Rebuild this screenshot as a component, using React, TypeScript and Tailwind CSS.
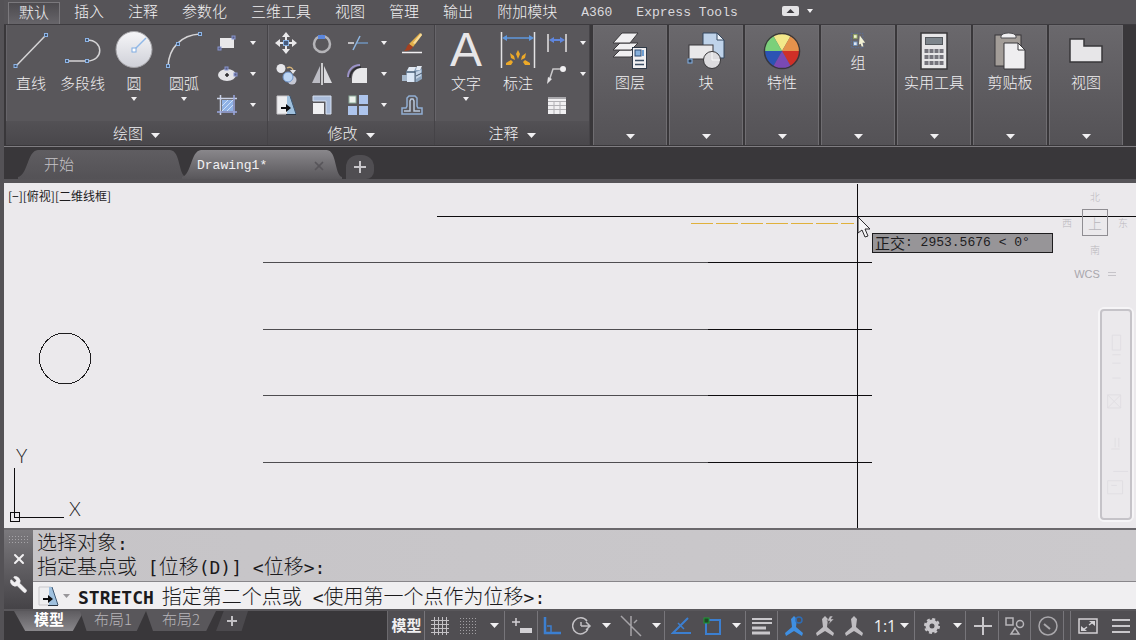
import type { ReactNode } from 'react';
import { Wrench, X } from 'lucide-react';

const MENU = ['插入', '注释', '参数化', '三维工具', '视图', '管理', '输出', '附加模块'];

function Caret({ small }: { small?: boolean }) {
    return small ? (
        <svg width="6" height="4" viewBox="0 0 6 4" className="shrink-0"><path d="M0 0h6L3 4z" fill="#f1f0f2" /></svg>
    ) : (
        <svg width="9" height="5" viewBox="0 0 9 5" className="shrink-0"><path d="M0 0h9L4.500 5z" fill="#f1f0f2" /></svg>
    );
}

/* Grip squares on the geometry icons */
function Grip({ x, y }: { x: number; y: number }) {
    return <rect x={x - 1.5} y={y - 1.5} width="3" height="3" fill="#3f536e" stroke="#8db4e6" />;
}

function LineIcon() {
    return (
        <svg width="38" height="38" viewBox="0 0 38 38">
            <path d="M4 35 34 4" stroke="#d5d4d6" strokeWidth="1.500" />
            <Grip x={3.5} y={35} />
            <Grip x={34} y={4} />
        </svg>
    );
}

function PolylineIcon() {
    return (
        <svg width="38" height="38" viewBox="0 0 38 38" fill="none">
            <path d="M3 30h20c17 0 17-21 0-21" stroke="#d5d4d6" strokeWidth="1.500" />
            <Grip x={3} y={30} />
            <Grip x={23} y={30} />
            <Grip x={23} y={9} />
        </svg>
    );
}

function CircleIcon() {
    return (
        <svg width="38" height="38" viewBox="0 0 38 38">
            <defs>
                <linearGradient id="disc" x1="0" y1="0" x2="0" y2="1">
                    <stop offset="0" stopColor="#f6f6f8" />
                    <stop offset="1" stopColor="#cfd0d8" />
                </linearGradient>
            </defs>
            <circle cx="19" cy="18.500" r="18" fill="url(#disc)" stroke="#a3a2a6" />
            <path d="M19 19 31 7" stroke="#8fb8e8" strokeWidth="1.500" />
            <rect x="17" y="17" width="4" height="4" fill="#fff" stroke="#7fabe2" />
        </svg>
    );
}

function ArcIcon() {
    return (
        <svg width="38" height="38" viewBox="0 0 38 38" fill="none">
            <path d="M3 35C4 17 16 4 35 3" stroke="#d5d4d6" strokeWidth="1.500" />
            <Grip x={3} y={35} />
            <Grip x={13} y={13} />
            <Grip x={35} y={3} />
        </svg>
    );
}

function RectIcon() {
    return (
        <svg width="22" height="22" viewBox="0 0 22 22">
            <rect x="4" y="6" width="14" height="10" fill="#e9e8ea" />
            <rect x="16" y="4" width="3" height="3" fill="#5b5f86" stroke="#8896cf" />
            <rect x="2" y="15" width="3" height="3" fill="#5b5f86" stroke="#8896cf" />
        </svg>
    );
}

function EllipseIcon() {
    return (
        <svg width="22" height="22" viewBox="0 0 22 22">
            <ellipse cx="11" cy="12" rx="9" ry="6" fill="#e4e4e8" />
            <path d="M9 12h4M11 10v4" stroke="#29282b" strokeWidth="1.500" />
            <rect x="9" y="4" width="3" height="3" fill="#5b5f86" stroke="#8896cf" />
            <rect x="18" y="10" width="3" height="3" fill="#5b5f86" stroke="#8896cf" />
        </svg>
    );
}

function HatchIcon() {
    return (
        <svg width="22" height="22" viewBox="0 0 22 22" fill="none">
            <rect x="6" y="6" width="11" height="11" fill="#8fb2e6" />
            <path d="M6 12l6-6M6 17 17 6M11 17l6-6" stroke="#cfe0f8" />
            <path d="M4.500 1v20M1 4.500h20" stroke="#c9d1e6" strokeWidth="1.500" />
            <path d="M18 1v20M1 18h20" stroke="#9aa8e0" strokeWidth="1.500" />
        </svg>
    );
}

function MoveIcon() {
    return (
        <svg width="22" height="22" viewBox="0 0 22 22" fill="#e9e8ea">
            <path d="M11 0l4 5h-3v3h-2V5H7zM11 22l4-5h-3v-3h-2v3H7zM0 11l5-4v3h3v2H5v3zM22 11l-5-4v3h-3v2h3v3z" />
            <rect x="8.500" y="8.500" width="5" height="5" fill="#46597a" stroke="#88b1e2" />
        </svg>
    );
}

function RotateIcon() {
    return (
        <svg width="22" height="22" viewBox="0 0 22 22" fill="none">
            <circle cx="11" cy="12" r="8" stroke="#b5b4b8" strokeWidth="2.500" />
            <path d="M7 3h7v4H7z" fill="#5b86dc" />
        </svg>
    );
}

function TrimIcon() {
    return (
        <svg width="22" height="22" viewBox="0 0 22 22" fill="none">
            <path d="M1 11h6" stroke="#e3e2e4" strokeWidth="1.500" />
            <path d="M9 11h12" stroke="#6f93bd" strokeWidth="1.500" />
            <path d="M6 18 13 4" stroke="#8fb5e0" strokeWidth="1.500" />
        </svg>
    );
}

function EraseIcon() {
    return (
        <svg width="22" height="22" viewBox="0 0 22 22">
            <path d="M1 20.500h20" stroke="#f1f0f2" strokeWidth="1.500" />
            <path d="M19 1l2 2-9 12-4-3z" fill="#e3b04a" />
            <path d="M20 1l1 2-7 9-2-1z" fill="#f6dc9a" />
            <path d="M8 12l4 3c-2 3-5 4-9 4 3-2 2-5 5-7z" fill="#a6401f" />
        </svg>
    );
}

function CopyIcon() {
    return (
        <svg width="22" height="22" viewBox="0 0 22 22">
            <circle cx="6" cy="5.500" r="4.500" fill="#e6e6ea" />
            <path d="M12 5c3-2 6 0 6 3" fill="none" stroke="#d3b27a" strokeWidth="1.500" />
            <path d="M15 7h6l-3 4z" fill="#e6e6ea" />
            <circle cx="17" cy="17" r="4.500" fill="#c6c8d4" />
            <circle cx="13" cy="14" r="5" fill="#bcd5f4" stroke="#6f94c9" />
        </svg>
    );
}

function MirrorIcon() {
    return (
        <svg width="22" height="22" viewBox="0 0 22 22">
            <path d="M9 3v17H1z" fill="#bcbcc4" />
            <path d="M13 3v17h8z" fill="#dadade" />
            <path d="M11 0v22" stroke="#f1f0f2" strokeWidth="1.500" />
        </svg>
    );
}

function FilletIcon() {
    return (
        <svg width="22" height="22" viewBox="0 0 22 22">
            <path d="M5 20v-4C5 9 9 5 14 5h6v15z" fill="#e8e8ea" />
            <path d="M1 14C1 7 6 2 13 2" fill="none" stroke="#9c93c8" strokeWidth="2" />
            <path d="M3 15C3 9 8 4 14 4" fill="none" stroke="#2b2b31" strokeWidth="1.500" />
        </svg>
    );
}

function ExplodeIcon() {
    return (
        <svg width="22" height="22" viewBox="0 0 22 22">
            <path d="M5 9l3-5h12l1 3v9l-5 3H6z" fill="#8ea5be" />
            <path d="M8 4h7l-2 4H6zM16 3h5l-2 4h-4z" fill="#e2e9f2" />
            <rect x="1" y="12" width="5" height="6" fill="#a6b8cc" />
            <rect x="6" y="10" width="8" height="9" fill="#dbe7f6" />
            <path d="M15 9l5-2v6l-5 3z" fill="#c3d3e6" />
            <path d="M14 8v11M5 9h9M15 13l6-3" stroke="#47586c" fill="none" />
        </svg>
    );
}

function StretchIcon() {
    return (
        <svg width="22" height="22" viewBox="0 0 22 22">
            <path d="M2 2h12v18H2z" fill="#eeeef0" stroke="#c9c7cb" />
            <path d="M12 2h3l6 18h-9z" fill="#9fc0de" />
            <path d="M15 2l6 18" stroke="#3e5873" />
            <path d="M11 20.500h10" stroke="#2b3542" />
            <path d="M6 13h5v-3l5 4-5 4v-3H6z" fill="#0c0c0e" />
        </svg>
    );
}

function ScaleIcon() {
    return (
        <svg width="22" height="22" viewBox="0 0 22 22">
            <path d="M2 2h18v18h-5V7H2z" fill="#a9bbd9" stroke="#d5dff0" />
            <rect x="2" y="9" width="11" height="11" fill="#efeff1" />
        </svg>
    );
}

function ArrayIcon() {
    return (
        <svg width="22" height="22" viewBox="0 0 22 22">
            <rect x="2" y="2" width="7" height="7" fill="#eef3ee" stroke="#8fae9d" />
            <rect x="12" y="1" width="9" height="9" fill="#adc4ec" />
            <rect x="1" y="12" width="9" height="9" fill="#adc4ec" />
            <rect x="12" y="12" width="9" height="9" fill="#adc4ec" />
        </svg>
    );
}

function OffsetIcon() {
    return (
        <svg width="22" height="22" viewBox="0 0 22 22" fill="none">
            <path d="M1 20h20v-6h-4l-1-2V4l-2-2H8L6 4v8l-1 2H1z" stroke="#91afd4" strokeWidth="1.500" />
            <path d="M3 17h6V7l1-2h2l1 2v10h6" stroke="#b9c8dc" strokeWidth="1.500" />
        </svg>
    );
}

function DimensionIcon() {
    return (
        <svg width="36" height="38" viewBox="0 0 36 38">
            <path d="M1.500 1v36M34.500 1v36" stroke="#e3e2e4" strokeWidth="1.500" />
            <path d="M5 7h26" stroke="#5f97dd" strokeWidth="1.500" />
            <path d="M2 7l5-3v6zM34 7l-5-3v6z" fill="#5f97dd" />
            <g fill="#eda928">
                <path d="M18 19l2 4-2 5-2-5zM10 22l4 3 1 4-4-2zM26 22l-4 3-1 4 4-2zM6 32l5-3 2 2-2 3-5 0zM30 32l-5-3-2 2 2 3 5 0z" />
            </g>
        </svg>
    );
}

function LinearDimIcon() {
    return (
        <svg width="22" height="22" viewBox="0 0 22 22">
            <path d="M2 2v18M20 2v18" stroke="#e3e2e4" strokeWidth="1.500" />
            <path d="M5 8h12" stroke="#5f86dd" strokeWidth="2" />
            <path d="M3 8l5-3v6zM19 8l-5-3v6z" fill="#5f86dd" />
        </svg>
    );
}

function LeaderIcon() {
    return (
        <svg width="22" height="22" viewBox="0 0 22 22" fill="none">
            <path d="M3 18 7 6h7" stroke="#c9c8ca" strokeWidth="1.500" />
            <circle cx="17" cy="6" r="3" fill="#f1f0f2" />
            <path d="M1 21l1-7 4 2z" fill="#e3e2e4" />
        </svg>
    );
}

function TableIcon() {
    return (
        <svg width="22" height="22" viewBox="0 0 22 22">
            <rect x="2" y="3" width="18" height="17" fill="#f1f0f2" />
            <path d="M2 4h18" stroke="#a9a8ac" strokeWidth="2" />
            <path d="M2 7.500h18M2 11.500h18M2 15.500h18M8 7v13M14 7v13" stroke="#b1b0b4" />
        </svg>
    );
}

function LayersIcon() {
    return (
        <svg width="38" height="38" viewBox="0 0 38 38">
            <g fill="#f1f0f2" stroke="#3a393c">
                <path d="M2 25l7-7h18l-7 7z" />
                <path d="M2 18l7-7h18l-7 7z" />
                <path d="M2 11l9-10h16l-8 10z" />
            </g>
            <rect x="21.500" y="15.500" width="14" height="21" fill="#f1f0f2" stroke="#2f3a48" />
            <rect x="24" y="18" width="6" height="6" fill="#86b0dc" stroke="#2c4a72" />
            <path d="M32 18v6" stroke="#6f9fd2" strokeWidth="2" />
            <path d="M24 28.500h9M24 32.500h9" stroke="#3b4d63" strokeWidth="1.500" />
        </svg>
    );
}

function BlockIcon() {
    return (
        <svg width="38" height="38" viewBox="0 0 38 38">
            <path d="M16 1h14l7 7v18H16z" fill="#bfd3ea" stroke="#33475f" />
            <path d="M30 1v7h7z" fill="#eef4fb" stroke="#33475f" />
            <rect x="2" y="13" width="24" height="14" fill="#e9e8ea" stroke="#38373a" />
            <circle cx="25" cy="28" r="8.500" fill="#dddcdf" stroke="#38373a" />
            <path d="M25 20v8h8" fill="none" stroke="#f9f9fa" />
            <rect x="1" y="27" width="4" height="4" fill="#2f4258" stroke="#86b2e4" />
        </svg>
    );
}

function WheelIcon() {
    return (
        <svg width="38" height="38" viewBox="-20 -20 40 40">
            <path d="M0 0-9.500-16.500A19 19 0 0 1 9.500-16.500z" fill="#f3e88a" />
            <path d="M0 0 9.500-16.500A19 19 0 0 1 19 0z" fill="#e5924c" />
            <path d="M0 0h19A19 19 0 0 1 9.500 16.500z" fill="#cf2f27" />
            <path d="M0 0 9.500 16.500A19 19 0 0 1-9.500 16.500z" fill="#7a49b4" />
            <path d="M0 0-9.500 16.500A19 19 0 0 1-19 0z" fill="#2c53b4" />
            <path d="M0 0h-19A19 19 0 0 1-9.500-16.500z" fill="#7bd07a" />
            <circle r="18.500" fill="none" stroke="#39383b" strokeWidth="1.500" />
        </svg>
    );
}

function GroupIcon() {
    return (
        <svg width="18" height="18" viewBox="0 1 18 20">
            <rect x="1.500" y="2.500" width="13" height="16" fill="none" stroke="#5b6f9a" strokeDasharray="2 1" />
            <rect x="4" y="4" width="4" height="4" fill="#eef0d0" stroke="#8aa05c" />
            <rect x="4" y="12" width="4" height="4" fill="#dfe6f2" stroke="#6789b8" />
            <path d="M11 5l6 8-3 0 1 4-2 0-1-3-2 1z" fill="#f2f1d4" />
        </svg>
    );
}

function CalculatorIcon() {
    return (
        <svg width="28" height="38" viewBox="0 0 28 38">
            <rect x="1" y="1" width="26" height="36" fill="#e7e6e8" stroke="#38373a" strokeWidth="1.500" />
            <rect x="5.500" y="5.500" width="17" height="7" fill="#7d858c" stroke="#55595e" />
            <g fill="#75747c">
                {[17, 23, 29].map((y) => [4, 9, 14, 19].map((x) => (
                    <rect key={`${x}-${y}`} x={x + 0.5} y={y} width="4" height="4" />
                )))}
            </g>
        </svg>
    );
}

function ClipboardIcon() {
    return (
        <svg width="32" height="38" viewBox="0 0 32 38">
            <rect x="1" y="3" width="26" height="31" fill="#a39d98" stroke="#38373a" />
            <path d="M7 4c1-4 14-4 15 0v2H7z" fill="#f1f0f2" stroke="#4d4c50" />
            <path d="M10 11h14l7 7v19H10z" fill="#efeef0" stroke="#38373a" />
            <path d="M24 11v7h7z" fill="#fff" stroke="#38373a" />
        </svg>
    );
}

function ViewIcon() {
    return (
        <svg width="34" height="38" viewBox="0 0 34 38">
            <path d="M1 7h14v7h18v16H1z" fill="#e7e6e8" stroke="#38373a" strokeWidth="1.500" />
        </svg>
    );
}

function BigTool({ label, icon, drop }: { label: string; icon: ReactNode; drop?: boolean }) {
    return (
        <button className="flex flex-col items-center min-w-[50px] px-1">
            {icon}
            <span className="mt-1 mb-1 leading-5">{label}</span>
            {drop && <Caret small />}
        </button>
    );
}

function SmallTool({ name, icon, drop }: { name: string; icon: ReactNode; drop?: boolean }) {
    return (
        <button aria-label={name} className="flex items-center gap-3 h-[31px] px-[7px]">
            {icon}
            {drop && <Caret small />}
        </button>
    );
}

function Panel({ title, children }: { title: string; children: ReactNode }) {
    return (
        <section className="flex flex-col border-r border-[#454347] shadow-[inset_1px_0_0_#67656a] bg-[#59575b]">
            <div className="flex-1 flex items-start">{children}</div>
            <button className="flex items-center justify-center gap-2 h-6 bg-linear-to-b from-[#535155] to-[#49474b]">
                {title}
                <span className="mt-1"><Caret /></span>
            </button>
        </section>
    );
}

function CollapsedPanel({ label, icon }: { label: string; icon: ReactNode }) {
    return (
        <button className="flex flex-col items-center justify-between w-[74px] pt-1.5 pb-1.5 border-x border-t border-[#6f6d71] bg-linear-to-b from-[#6a686c] to-[#545256]">
            <span className="flex flex-col items-center">
                {icon}
                <span className="mt-0.5 leading-5 whitespace-nowrap">{label}</span>
            </span>
            <Caret />
        </button>
    );
}

/* Ideographs keep the base size, Latin runs get the narrower monospaced face */
function Prompt({ text }: { text: string }) {
    return (
        <>
            {text.split(/([\x20-\x7e]+)/).map((part, i) => (
                <span key={i} className={i % 2 ? 'font-[DejaVu_Sans_Mono,monospace] text-[18px] leading-none whitespace-pre' : ''}>{part}</span>
            ))}
        </>
    );
}

function StatusGroup({ children }: { children: ReactNode }) {
    return <div className="flex items-stretch shadow-[inset_-1px_0_0_#77757a]">{children}</div>;
}

function StatusButton({ name, width, children }: { name: string; width: string; children: ReactNode }) {
    return <button aria-label={name} className={`flex items-center justify-center ${width}`}>{children}</button>;
}

function FileTabShape({ top, bottom, id }: { top: string; bottom: string; id: string }) {
    return (
        <svg className="absolute inset-0 w-full h-full" viewBox="0 0 168 30" preserveAspectRatio="none">
            <defs>
                <linearGradient id={id} x1="0" y1="0" x2="0" y2="1">
                    <stop offset="0" stopColor={top} />
                    <stop offset="1" stopColor={bottom} />
                </linearGradient>
            </defs>
            <path d="M0 28C10 26 9 2 20 1H152C163 2 160 26 168 28V30H0z" fill={`url(#${id})`} />
        </svg>
    );
}

function Ribbon() {
    return (
        <div className="flex items-stretch gap-[2px] h-[121px] pl-0.5 bg-[#39373a] border-t border-[#3d3b3f]">
            <div className="flex mr-px">
                <Panel title="绘图">
                    <div className="flex pt-1.5">
                        <BigTool label="直线" icon={<LineIcon />} />
                        <BigTool label="多段线" icon={<PolylineIcon />} />
                        <BigTool label="圆" icon={<CircleIcon />} drop />
                        <BigTool label="圆弧" icon={<ArcIcon />} drop />
                    </div>
                    <div className="flex flex-col pt-0.5 pr-1">
                        <SmallTool name="矩形" icon={<RectIcon />} drop />
                        <SmallTool name="椭圆" icon={<EllipseIcon />} drop />
                        <SmallTool name="图案填充" icon={<HatchIcon />} drop />
                    </div>
                </Panel>
                <Panel title="修改">
                    <div className="grid grid-cols-[36px_36px_54px_36px] pt-0.5 pr-1">
                        <SmallTool name="移动" icon={<MoveIcon />} />
                        <SmallTool name="旋转" icon={<RotateIcon />} />
                        <SmallTool name="修剪" icon={<TrimIcon />} drop />
                        <SmallTool name="删除" icon={<EraseIcon />} />
                        <SmallTool name="复制" icon={<CopyIcon />} />
                        <SmallTool name="镜像" icon={<MirrorIcon />} />
                        <SmallTool name="圆角" icon={<FilletIcon />} drop />
                        <SmallTool name="分解" icon={<ExplodeIcon />} />
                        <SmallTool name="拉伸" icon={<StretchIcon />} />
                        <SmallTool name="缩放" icon={<ScaleIcon />} />
                        <SmallTool name="阵列" icon={<ArrayIcon />} drop />
                        <SmallTool name="偏移" icon={<OffsetIcon />} />
                    </div>
                </Panel>
                <Panel title="注释">
                    <div className="flex gap-0.5 pl-1.5 pt-1.5">
                        <BigTool
                            label="文字"
                            icon={<span className="h-[38px] text-[48px] leading-[38px] text-[#e7e6e8] font-[Liberation_Sans,sans-serif]">A</span>}
                            drop
                        />
                        <BigTool label="标注" icon={<DimensionIcon />} />
                    </div>
                    <div className="flex flex-col items-start pt-0.5 -mx-1">
                        <SmallTool name="线性" icon={<LinearDimIcon />} drop />
                        <SmallTool name="引线" icon={<LeaderIcon />} drop />
                        <SmallTool name="表格" icon={<TableIcon />} />
                    </div>
                </Panel>
            </div>
            <CollapsedPanel label="图层" icon={<LayersIcon />} />
            <CollapsedPanel label="块" icon={<BlockIcon />} />
            <CollapsedPanel label="特性" icon={<WheelIcon />} />
            <CollapsedPanel label="组" icon={<GroupIcon />} />
            <CollapsedPanel label="实用工具" icon={<CalculatorIcon />} />
            <CollapsedPanel label="剪贴板" icon={<ClipboardIcon />} />
            <CollapsedPanel label="视图" icon={<ViewIcon />} />
        </div>
    );
}

function DrawingArea() {
    return (
        <main className="relative flex-1 min-h-[340px] bg-[#ebe9ec] overflow-hidden text-[#1d1c1e]">
            <svg className="absolute inset-0 w-full h-full" shapeRendering="crispEdges" fill="none">
                {[79, 146, 212, 279].map((y) => (
                    <g key={y}>
                        <path d={`M259 ${y}.5h445`} stroke="#4e4d50" />
                        <path d={`M704 ${y}.5h164`} stroke="#0d0c0e" />
                    </g>
                ))}
                <line x1="687" y1="40.500" x2="850" y2="40.500" stroke="#e0b13c" strokeDasharray="22 3" />
                <circle cx="61" cy="175.500" r="25.500" stroke="#1d1c1e" />
                <line x1="433" y1="33.500" x2="100%" y2="33.500" stroke="#0d0c0e" />
                <line x1="853.500" y1="1" x2="853.500" y2="100%" stroke="#0d0c0e" />
            </svg>
            <span className="absolute left-1 top-1 text-[12px] leading-[18px] font-normal font-[Noto_Sans_CJK_SC,sans-serif]">[−][俯视][二维线框]</span>

            <svg className="absolute left-0 bottom-0" width="90" height="90" fill="none" stroke="#0d0c0e">
                <path d="M10.500 30v49.500H60M6.500 74.500h9v9h-9z" shapeRendering="crispEdges" />
                <g fill="#1d1c1e" stroke="none" fontSize="19" fontFamily="Lato, sans-serif" fontWeight="300">
                    <text x="12" y="25">Y</text>
                    <text x="65" y="78">X</text>
                </g>
            </svg>

            <div className="absolute left-[868px] top-[50px] flex items-center h-5 w-[181px] pl-0.5 bg-[#979598] border border-[#1d1c1e] font-normal whitespace-pre">
                正交<span className="font-[Liberation_Mono,monospace] text-[13px]">: 2953.5676 &lt; 0°</span>
            </div>
            <svg className="absolute left-[853px] top-[33px]" width="14" height="24" viewBox="0 0 14 24">
                <path d="M1 1v16l4-3 3 7 3-1-3-7h5z" fill="#f5f4f6" stroke="#2c2b2e" />
            </svg>

            <div className="absolute right-2 top-1 w-[66px] flex flex-col items-center text-[10px] leading-5 text-[#b9b7bc]">
                <span>北</span>
                <div className="flex items-center justify-between w-full mt-0.5">
                    <span>西</span>
                    <span className="flex items-center justify-center w-[26px] h-[27px] border border-[#8f8d92] text-[14px]">上</span>
                    <span>东</span>
                </div>
                <span className="mt-1">南</span>
                <button className="flex items-center gap-2 mt-1.5 text-[11px] leading-4 text-[#a9a7ac] font-[Liberation_Sans,sans-serif]">
                    WCS<span className="w-2 h-1 border-y border-[#c6c4c9]" />
                </button>
            </div>

            <div className="absolute right-0.5 top-[124px] bottom-1.5 w-9 p-px rounded-md border border-[#f6f5f7] bg-[#f6f5f7]">
                <svg className="w-full h-full rounded border-2 border-[#c5c3c8] bg-[#ebe9ec]" viewBox="0 0 30 210" fill="none" stroke="#e0dee2">
                    <path d="M11 20h9v16h-9zM11 41h9M11 50h9M11 66h9M6 84l14 14M20 84 6 98M6 84h14v14H6zM14 130v10M18 130v10M10 142h9M12 166h16M6 176h16v14H6zM10 181h6" />
                </svg>
            </div>
        </main>
    );
}

function CommandLine() {
    return (
        <div className="flex h-[81px] shrink-0 border-t-2 border-[#6a686c] text-[20px] text-[#1b1a1c]">
            <div className="flex flex-col items-center gap-2 w-[29px] pt-1.5 bg-linear-to-b from-[#7b797d] to-[#454347] text-[#f1f0f2]">
                <svg width="22" height="7" viewBox="0 0 22 7" stroke="#a6a4a8" strokeDasharray="1 2">
                    <path d="M1 .5h20M1 3.500h20M1 6.500h20" />
                </svg>
                <button aria-label="关闭"><X size={16} strokeWidth={3} /></button>
                <button aria-label="自定义"><Wrench size={19} fill="#f1f0f2" strokeWidth={1} className="-scale-x-100" /></button>
            </div>
            <div className="flex-1 flex flex-col">
                <div className="flex-1 px-1 bg-linear-to-r from-[#c6c4c7] to-[#cbc9cc]">
                    <p className="leading-6"><Prompt text="选择对象:" /></p>
                    <p className="leading-6"><Prompt text="指定基点或 [位移(D)] <位移>:" /></p>
                </div>
                <div className="flex items-center h-7 px-1 border-t border-[#88868a] bg-[#f0eff1]">
                    <button aria-label="最近使用的命令" className="flex items-center gap-1 mr-2">
                        <StretchIcon />
                        <svg width="7" height="4" viewBox="0 0 7 4"><path d="M0 0h7L3.500 4z" fill="#98969a" /></svg>
                    </button>
                    <label htmlFor="command" className="whitespace-pre leading-6">
                        <b className="mr-2 text-[18px] leading-none font-bold font-[DejaVu_Sans_Mono,monospace]">STRETCH</b>
                        <Prompt text="指定第二个点或 <使用第一个点作为位移>:" />
                    </label>
                    <input id="command" className="flex-1 min-w-0 bg-transparent outline-none" />
                </div>
            </div>
        </div>
    );
}

function AnnoFigure({ color, extra }: { color: string; extra?: ReactNode }) {
    return (
        <svg width="22" height="22" viewBox="0 0 22 22" fill={color}>
            <path d="M11 1l3 3-1 8 7 6-1 3-8-5-8 5-1-3 7-6-1-8z" />
            {extra}
        </svg>
    );
}

function StatusBar() {
    return (
        <footer className="flex items-stretch h-[31px] shrink-0 bg-[#39373a] border-t-2 border-[#59575b] text-[#f1f0f2]">
            <nav className="flex items-start h-5 pl-2.5 text-[#b7b5b9]">
                <button className="w-[70px] h-5 pb-1 leading-4 text-[15px] font-bold text-white bg-linear-to-b from-[#5e5c60] to-[#89878b] [clip-path:polygon(0_0,100%_0,84%_100%,16%_100%)]">模型</button>
                <button className="w-[66px] h-5 -ml-1 pb-1 leading-4 bg-[#59575b] [clip-path:polygon(0_0,100%_0,86%_100%,10%_100%)]">布局1</button>
                <button className="w-[70px] h-5 pb-1 leading-4 bg-[#59575b] [clip-path:polygon(0_0,100%_0,86%_100%,10%_100%)]">布局2</button>
                <button aria-label="新建布局" className="flex items-center justify-center w-8 h-5 bg-[#4b494d] [clip-path:polygon(24%_0,100%_0,80%_100%,0_100%)]">
                    <svg width="12" height="12" viewBox="0 0 12 12"><path d="M6 1v10M1 6h10" stroke="#c2c0c4" strokeWidth="2" /></svg>
                </button>
            </nav>
            <div className="flex items-stretch ml-auto bg-[#504e52] border-l border-[#6b696d]">
                <StatusGroup>
                    <button className="w-[37px] text-[15px] font-bold whitespace-nowrap text-center">模型</button>
                </StatusGroup>
                <StatusGroup>
                    <StatusButton name="栅格" width="w-[30px]">
                        <svg width="18" height="18" viewBox="0 0 18 18" stroke="#c3c1c5"><path d="M3.500 0v18M7.500 0v18M11.500 0v18M15.500 0v18M0 3.500h18M0 7.500h18M0 11.500h18M0 15.500h18" /></svg>
                    </StatusButton>
                    <StatusButton name="捕捉" width="w-7">
                        <svg width="18" height="18" viewBox="0 0 18 18" stroke="#a19fa3" strokeDasharray="1 2"><path d="M0 1.500h18M0 4.500h18M0 7.500h18M0 10.500h18M0 13.500h18M0 16.500h18" /></svg>
                    </StatusButton>
                    <StatusButton name="捕捉设置" width="w-[22px]"><Caret /></StatusButton>
                </StatusGroup>
                <StatusGroup>
                    <StatusButton name="动态输入" width="w-[33px]">
                        <svg width="20" height="18" viewBox="0 0 20 18"><path d="M4 1v8M0 5h8" stroke="#d3d1d5" strokeWidth="1.500" /><rect x="8" y="11" width="12" height="5" fill="#d3d1d5" /></svg>
                    </StatusButton>
                </StatusGroup>
                <StatusGroup>
                    <StatusButton name="正交" width="w-7">
                        <svg width="18" height="18" viewBox="0 0 18 18" fill="none" stroke="#3c7fd0"><path d="M2 0v16h16" strokeWidth="2.500" /><path d="M4 9h4v6" strokeWidth="1.500" /></svg>
                    </StatusButton>
                    <StatusButton name="极轴" width="w-8">
                        <svg width="20" height="18" viewBox="0 0 20 18" fill="none" stroke="#c3c1c5" strokeWidth="1.500"><path d="M15 4a8 8 0 1 0 1 8M9 9h9M9 9V5M14 5l4 4-4 4" /></svg>
                    </StatusButton>
                    <StatusButton name="极轴设置" width="w-4"><Caret /></StatusButton>
                    <StatusButton name="等轴测" width="w-[34px]">
                        <svg width="22" height="22" viewBox="0 0 22 22" stroke="#a5a3a7" strokeWidth="1.500"><path d="M1 1l20 20M11 1v20" /><path d="M14 8l3-3" /></svg>
                    </StatusButton>
                    <StatusButton name="等轴测设置" width="w-[17px]"><Caret /></StatusButton>
                </StatusGroup>
                <StatusGroup>
                    <StatusButton name="对象追踪" width="w-8">
                        <svg width="20" height="18" viewBox="0 0 20 18" fill="none" stroke="#3c7fd0" strokeWidth="1.500"><path d="M17 1 2 16h18" strokeWidth="2" /><path d="M7 6l6 6" /></svg>
                    </StatusButton>
                    <StatusButton name="对象捕捉" width="w-[30px]">
                        <svg width="20" height="20" viewBox="0 0 20 20" fill="none"><rect x="4" y="4" width="14" height="14" stroke="#3c7fd0" strokeWidth="2" /><rect x="2" y="2" width="5" height="5" fill="#1f4a26" stroke="#1c9a35" /></svg>
                    </StatusButton>
                    <StatusButton name="捕捉模式" width="w-[19px]"><Caret /></StatusButton>
                </StatusGroup>
                <StatusGroup>
                    <StatusButton name="线宽" width="w-8">
                        <svg width="20" height="18" viewBox="0 0 20 18" stroke="#c9c7cb"><path d="M0 2h20" strokeWidth="2" /><path d="M0 6h20" strokeWidth="2" /><path d="M0 11h14" strokeWidth="3" /><path d="M0 16h18" strokeWidth="3" /></svg>
                    </StatusButton>
                </StatusGroup>
                <StatusGroup>
                    <StatusButton name="注释可见性" width="w-8">
                        <AnnoFigure color="#3f8fe2" extra={<circle cx="16" cy="5" r="3" fill="none" stroke="#2f6cb4" strokeWidth="1.500" />} />
                    </StatusButton>
                    <StatusButton name="自动缩放" width="w-[30px]">
                        <AnnoFigure color="#bebcc0" extra={<path d="M16 1l-3 5h3l-2 4 6-6h-3l2-3z" stroke="#504e52" strokeWidth=".5" />} />
                    </StatusButton>
                    <StatusButton name="注释比例" width="w-7"><AnnoFigure color="#bebcc0" /></StatusButton>
                    <button className="flex items-center justify-center gap-1 w-[47px] text-[16px] font-normal font-[Open_Sans,sans-serif]">1:1<Caret /></button>
                </StatusGroup>
                <StatusGroup>
                    <StatusButton name="切换工作空间" width="w-[33px]">
                        <svg width="18" height="18" viewBox="0 0 18 18" fill="none" stroke="#c9c7cb"><circle cx="9" cy="9" r="4.500" strokeWidth="4" /><circle cx="9" cy="9" r="7" strokeWidth="2" strokeDasharray="3 2.500" /></svg>
                    </StatusButton>
                    <StatusButton name="工作空间列表" width="w-[18px]"><Caret /></StatusButton>
                </StatusGroup>
                <StatusGroup>
                    <StatusButton name="注释监视器" width="w-[33px]">
                        <svg width="18" height="18" viewBox="0 0 18 18" stroke="#c9c7cb" strokeWidth="2"><path d="M9 0v18M0 9h18" /></svg>
                    </StatusButton>
                </StatusGroup>
                <StatusGroup>
                    <StatusButton name="隔离对象" width="w-8">
                        <svg width="20" height="20" viewBox="0 0 20 20" fill="none" stroke="#b7b5b9" strokeWidth="1.500"><path d="M1 2h7v7H1zM6 18l4-6 4 6z" /><circle cx="15" cy="8" r="3.500" /></svg>
                    </StatusButton>
                </StatusGroup>
                <StatusGroup>
                    <StatusButton name="硬件加速" width="w-[33px]">
                        <svg width="20" height="20" viewBox="0 0 20 20" fill="none" stroke="#a9a7ab"><circle cx="10" cy="10" r="9" strokeWidth="1.500" /><path d="M6 8l6 5" strokeWidth="2" /></svg>
                    </StatusButton>
                </StatusGroup>
                <div className="flex items-stretch ml-1.5 border-l border-[#77757a]">
                    <StatusButton name="全屏显示" width="w-[34px]">
                        <svg width="20" height="16" viewBox="0 0 20 16" fill="none" stroke="#d3d1d5"><rect x="1" y="1" width="18" height="14" strokeWidth="1.500" /><path d="M11 7l4-3M9 9l-4 3" strokeWidth="1.500" /><path d="M11 3h6v5zM3 8v5h6z" fill="#d3d1d5" stroke="none" /></svg>
                    </StatusButton>
                    <StatusButton name="自定义" width="w-[31px]">
                        <svg width="18" height="16" viewBox="0 0 18 16" stroke="#c9c7cb" strokeWidth="2"><path d="M0 2h18M0 8h18M0 14h18" /></svg>
                    </StatusButton>
                </div>
            </div>
        </footer>
    );
}

export default function App() {
    return (
        <div className="flex flex-col min-h-screen pl-1 bg-[#545256] font-[Noto_Sans_CJK_SC,sans-serif] text-[15px] font-light text-[#f1f0f2] overflow-x-hidden">
            <nav className="flex items-end h-6 pl-1 bg-[#565458]">
                <button className="h-[22px] mr-0.5 px-2.5 pb-1 leading-4 border border-b-0 border-[#7b797d] bg-linear-to-b from-[#4d4b4f] to-[#67656a]">默认</button>
                {MENU.map((item) => (
                    <button key={item} className="h-[22px] px-3 pb-1 leading-4">{item}</button>
                ))}
                <button className="h-[22px] px-3 leading-4 font-[Liberation_Mono,monospace] text-[13px] text-[#dcdade]">A360</button>
                <button className="h-[22px] px-3 leading-4 font-[Liberation_Mono,monospace] text-[13px] text-[#dcdade]">Express Tools</button>
                <button aria-label="最小化功能区" className="flex items-center gap-2 h-[22px] ml-8 pb-1">
                    <svg width="17" height="10" viewBox="0 0 17 10"><rect width="17" height="10" rx="2" fill="#e3e2e4" /><path d="M8.500 3l4 4h-8z" fill="#3d3b3f" /></svg>
                    <Caret small />
                </button>
            </nav>
            <Ribbon />
            <div className="flex items-end h-[38px] shrink-0 pl-3.5 bg-[#39373a] border-b-4 border-[#565458] shadow-[inset_0_1px_0_#39373a,inset_0_2px_0_#7f7d81]">
                <button className="relative w-[168px] h-[30px] pl-[26px] text-left text-[#c6c4c8]">
                    <FileTabShape id="tab-start" top="#5f5d61" bottom="#545256" />
                    <span className="relative">开始</span>
                </button>
                <div className="relative flex items-center justify-between w-[160px] h-[30px] -ml-1 pt-1 pl-[15px] pr-4">
                    <FileTabShape id="tab-drawing" top="#89878b" bottom="#59575b" />
                    <button className="relative font-[Liberation_Mono,monospace] text-[13px]">Drawing1*</button>
                    <button aria-label="关闭图形" className="relative text-[#57555a]"><X size={14} strokeWidth={3} /></button>
                </div>
                <button aria-label="新图形" className="flex items-center justify-center w-7 h-6 ml-1 rounded-t-xl rounded-br-lg bg-[#504e52]">
                    <svg width="12" height="12" viewBox="0 0 12 12"><path d="M6 0v12M0 6h12" stroke="#c9c7cb" strokeWidth="2" /></svg>
                </button>
            </div>
            <DrawingArea />
            <CommandLine />
            <StatusBar />
        </div>
    );
}
